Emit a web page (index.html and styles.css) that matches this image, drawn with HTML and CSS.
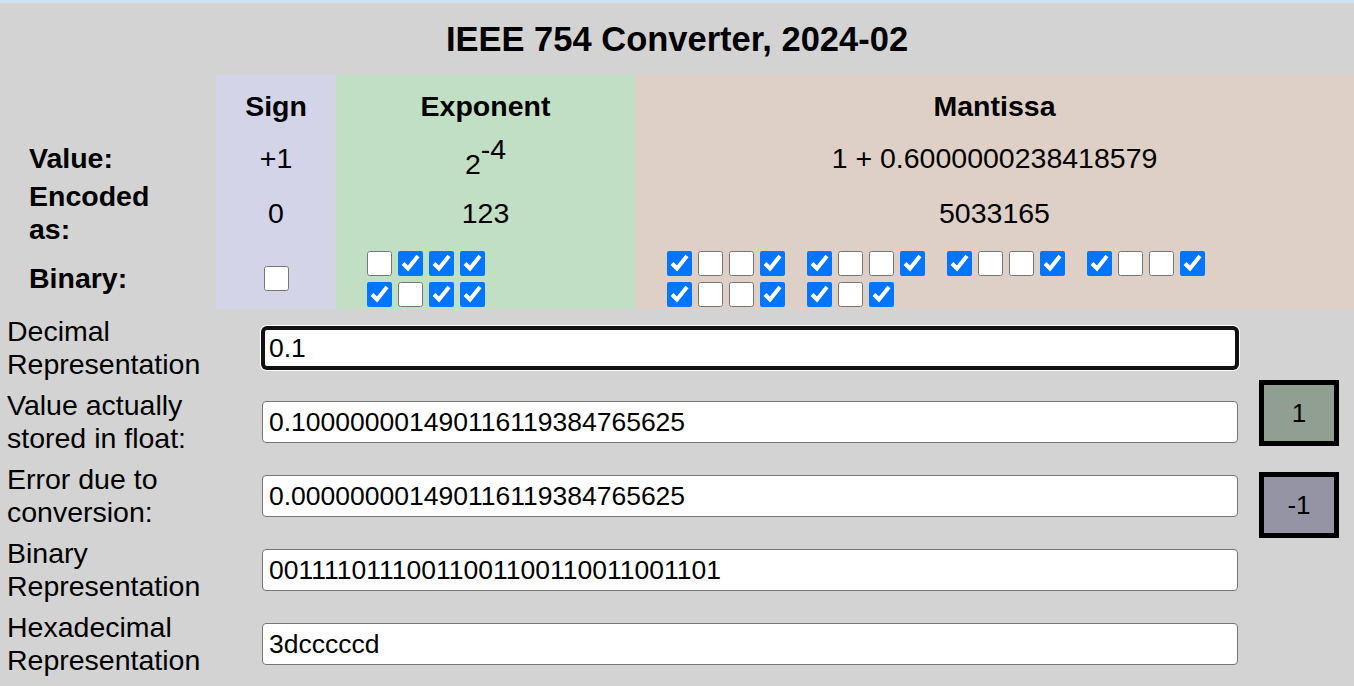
FILE: index.html
```html
<!DOCTYPE html>
<html>
<head>
<meta charset="utf-8">
<title>IEEE 754 Converter</title>
<link rel="stylesheet" href="styles.css">
</head>
<body>
<h1 class="title">IEEE 754 Converter, 2024-02</h1>
<div class="fields">
  <div class="cell lbl"></div>
  <div class="cell hdr sign">Sign</div>
  <div class="cell hdr exp">Exponent</div>
  <div class="cell hdr man">Mantissa</div>

  <div class="cell lbl">Value:</div>
  <div class="cell sign">+1</div>
  <div class="cell exp"><span class="pow">2<sup>-4</sup></span></div>
  <div class="cell man">1 + 0.6000000238418579</div>

  <div class="cell lbl">Encoded as:</div>
  <div class="cell sign">0</div>
  <div class="cell exp">123</div>
  <div class="cell man">5033165</div>

  <div class="cell lbl">Binary:</div>
  <div class="cell sign"><input type="checkbox" class="bit"></div>
  <div class="cell exp bits">
    <div class="bitrow">
      <div class="group"><input type="checkbox" class="bit"><input type="checkbox" class="bit" checked><input type="checkbox" class="bit" checked><input type="checkbox" class="bit" checked></div>
    </div>
    <div class="bitrow">
      <div class="group"><input type="checkbox" class="bit" checked><input type="checkbox" class="bit"><input type="checkbox" class="bit" checked><input type="checkbox" class="bit" checked></div>
    </div>
  </div>
  <div class="cell man bits mbits">
    <div class="bitrow">
      <div class="group"><input type="checkbox" class="bit" checked><input type="checkbox" class="bit"><input type="checkbox" class="bit"><input type="checkbox" class="bit" checked></div>
      <div class="group"><input type="checkbox" class="bit" checked><input type="checkbox" class="bit"><input type="checkbox" class="bit"><input type="checkbox" class="bit" checked></div>
      <div class="group"><input type="checkbox" class="bit" checked><input type="checkbox" class="bit"><input type="checkbox" class="bit"><input type="checkbox" class="bit" checked></div>
      <div class="group"><input type="checkbox" class="bit" checked><input type="checkbox" class="bit"><input type="checkbox" class="bit"><input type="checkbox" class="bit" checked></div>
    </div>
    <div class="bitrow">
      <div class="group"><input type="checkbox" class="bit" checked><input type="checkbox" class="bit"><input type="checkbox" class="bit"><input type="checkbox" class="bit" checked></div>
      <div class="group"><input type="checkbox" class="bit" checked><input type="checkbox" class="bit"><input type="checkbox" class="bit" checked></div>
    </div>
  </div>
</div>

<div class="form">
  <div class="rows">
    <div class="row"><label class="flabel">Decimal Representation</label><input class="txt focus" type="text" value="0.1"></div>
    <div class="row"><label class="flabel">Value actually stored in float:</label><input class="txt" type="text" value="0.100000001490116119384765625"></div>
    <div class="row"><label class="flabel">Error due to conversion:</label><input class="txt" type="text" value="0.000000001490116119384765625"></div>
    <div class="row"><label class="flabel">Binary Representation</label><input class="txt" type="text" value="00111101110011001100110011001101"></div>
    <div class="row"><label class="flabel">Hexadecimal Representation</label><input class="txt" type="text" value="3dcccccd"></div>
  </div>
  <div class="side">
    <div class="btn plus">1</div>
    <div class="btn minus">-1</div>
  </div>
</div>
</body>
</html>
```
FILE: styles.css
```css
html, body {
  margin: 0;
  padding: 0;
}
body {
  background: #d3d3d3;
  font-family: "Liberation Sans", Arial, sans-serif;
  font-size: 28.5px;
  color: #000;
  border-top: 3px solid #cfe2f2;
}
.title {
  margin: 0;
  height: 72px;
  display: flex;
  align-items: center;
  justify-content: center;
  font-size: 34.5px;
  font-weight: bold;
}
.fields {
  display: grid;
  grid-template-columns: 216px 120px 299px 1fr;
  grid-template-rows: 63px 40px 70px 61px;
}
.cell {
  display: flex;
  align-items: center;
  justify-content: center;
  text-align: center;
  line-height: 33px;
}
.lbl {
  justify-content: flex-start;
  text-align: left;
  padding: 0 50px 0 29px;
  font-weight: bold;
}
.hdr {
  font-weight: bold;
}
.sign { background: #d4d4e8; }
.exp { background: #c1dfc4; }
.man { background: #ded0c6; }
.pow {
  position: relative;
  top: 6px;
}
.pow sup {
  font-size: 1em;
  line-height: 0;
  position: relative;
  top: -4px;
}
.bits {
  flex-direction: column;
  align-items: flex-start;
  justify-content: center;
  gap: 6px;
  padding-left: 31px;
}
.mbits {
  padding-left: 32px;
}
.bitrow {
  display: flex;
  gap: 22px;
}
.group {
  display: flex;
  gap: 6px;
}
input.bit {
  width: 25px;
  height: 25px;
  margin: 0;
}
.form {
  display: flex;
  gap: 21px;
  padding: 6px 15px 0 7px;
}
.rows {
  flex: 1;
  display: flex;
  flex-direction: column;
  gap: 8px;
}
.row {
  display: flex;
  align-items: center;
  height: 66px;
}
.flabel {
  width: 255px;
  flex: none;
  line-height: 33px;
}
.txt {
  flex: 1;
  min-width: 0;
  height: 42px;
  box-sizing: border-box;
  border: 1px solid #767676;
  border-radius: 4px;
  background: #fff;
  padding: 0 6px;
  font-family: "Liberation Sans", Arial, sans-serif;
  font-size: 26.5px;
  color: #000;
  outline: none;
}
.txt.focus {
  border: 3px solid #111;
  border-radius: 5px;
  padding: 0 4px;
  box-shadow: 0 0 0 1px #111, 0 0 0 2px #fff;
}
.side {
  width: 80px;
  display: flex;
  flex-direction: column;
  gap: 26px;
  padding-top: 65px;
}
.btn {
  height: 66px;
  box-sizing: border-box;
  border: 5px solid #000;
  display: flex;
  align-items: center;
  justify-content: center;
  font-size: 26px;
}
.plus { background: #909f90; }
.minus { background: #9494a5; }
```
